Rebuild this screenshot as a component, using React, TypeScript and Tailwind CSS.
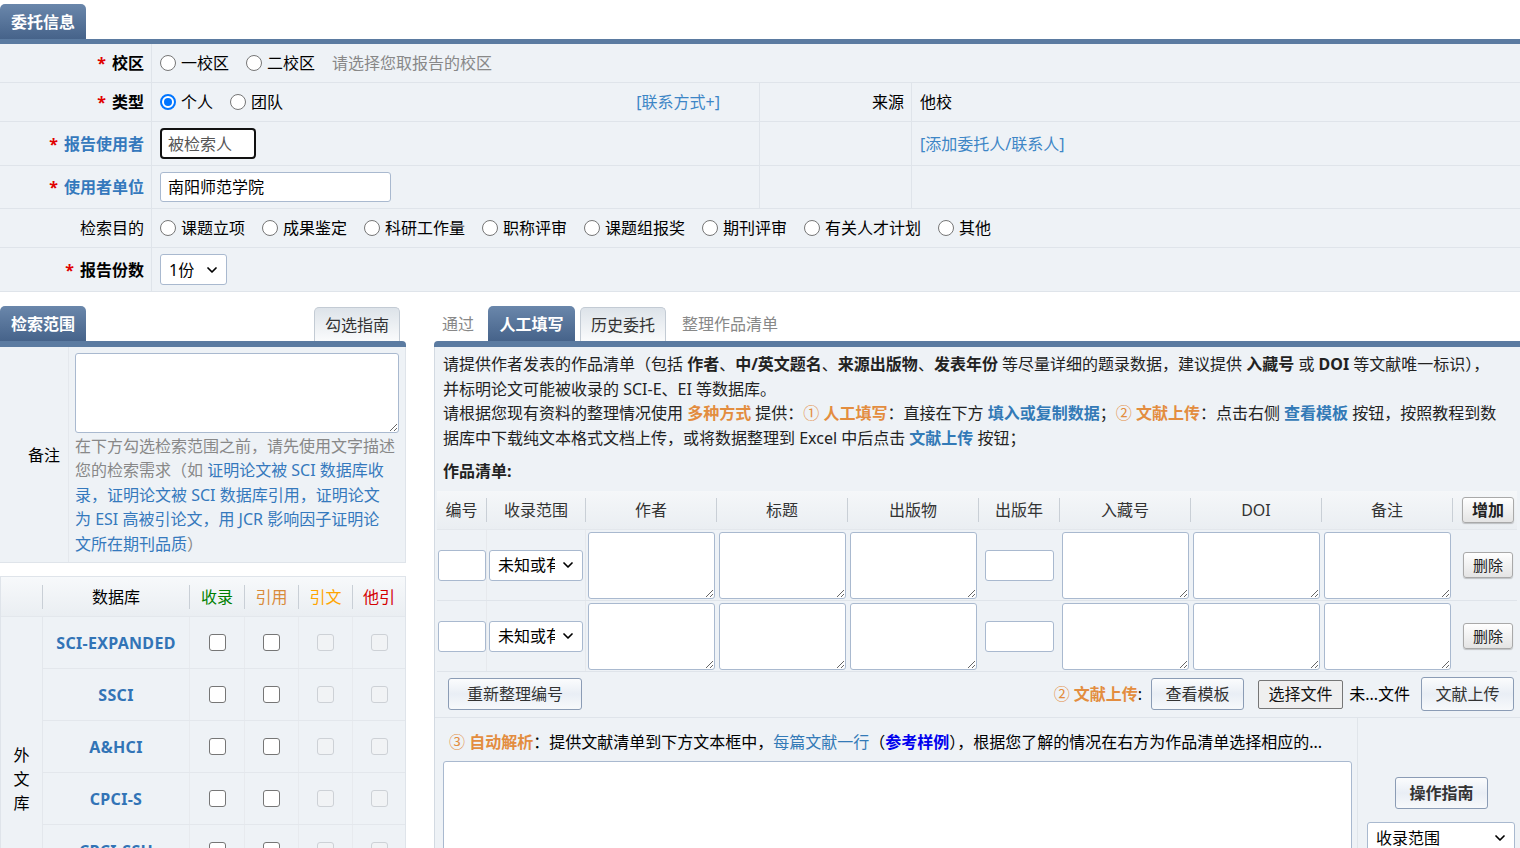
import React from "react";
import { ChevronDown } from "lucide-react";

const LINE = "border-[#dfe4ea]";

const DarkTab = ({ children, className = "" }: { children: React.ReactNode; className?: string }) => (
  <div
    className={`h-[35px] flex items-center justify-center rounded-t-[5px] bg-linear-to-b from-[#6a87ab] to-[#46638a] text-white font-bold text-[16px] ${className}`}
  >
    {children}
  </div>
);

const LightTab = ({ children, className = "" }: { children: React.ReactNode; className?: string }) => (
  <div
    className={`h-[34px] flex items-center justify-center rounded-t-[5px] border border-b-0 border-[#c3cbd4] bg-linear-to-b from-[#dde3e9] to-[#fafbfc] text-[#333] ${className}`}
  >
    {children}
  </div>
);

const Label = ({
  req,
  blue,
  bold,
  children,
}: {
  req?: boolean;
  blue?: boolean;
  bold?: boolean;
  children?: React.ReactNode;
}) => (
  <div className={`w-[152px] shrink-0 flex items-center justify-end pr-[7px] border-r ${LINE}`}>
    {req && <span className="text-[#e00000] font-bold mr-[6px]">*</span>}
    <span className={blue ? "text-[#3579bd] font-bold" : bold ? "font-bold" : ""}>{children}</span>
  </div>
);

// drawn radio, sized like the reference (16px)
const Radio = ({ label, checked }: { label: string; checked?: boolean }) => (
  <div className="flex items-center mr-[17px] whitespace-nowrap">
    {checked ? (
      <span className="mr-[5px] w-[16px] h-[16px] rounded-full border-2 border-[#0075ff] bg-white flex items-center justify-center">
        <span className="w-[8px] h-[8px] rounded-full bg-[#0075ff]" />
      </span>
    ) : (
      <span className="mr-[5px] w-[16px] h-[16px] rounded-full border border-[#767676] bg-white" />
    )}
    <span>{label}</span>
  </div>
);

const Check = ({ disabled }: { disabled?: boolean }) =>
  disabled ? (
    <span className="w-[17px] h-[17px] rounded-[3px] border border-[#cdd1d6] bg-[#f1f3f5]" />
  ) : (
    <span className="w-[17px] h-[17px] rounded-[3px] border border-[#767676] bg-white" />
  );

const FakeSelect = ({ text, className = "", textW = "" }: { text: string; className?: string; textW?: string }) => (
  <div
    className={`flex items-center justify-between bg-white border border-[#a9b9cf] rounded-[3px] pl-[8px] pr-[6px] ${className}`}
  >
    <span className={`overflow-hidden whitespace-nowrap ${textW}`}>{text}</span>
    <ChevronDown size={16} strokeWidth={2.6} className="shrink-0" />
  </div>
);

const Area = ({ className = "" }: { className?: string }) => (
  <textarea className={`block bg-white border border-[#a9b9cf] rounded-[3px] resize ${className}`} />
);

const BlueBtn = ({ children, className = "" }: { children: React.ReactNode; className?: string }) => (
  <div
    className={`flex items-center justify-center rounded-[3px] border border-[#8b9cb5] bg-linear-to-b from-[#fbfcfd] via-[#e9eef5] to-[#f7f9fb] text-[#333] ${className}`}
  >
    {children}
  </div>
);

const GrayBtn = ({ children, className = "" }: { children: React.ReactNode; className?: string }) => (
  <div
    className={`flex items-center justify-center rounded-[3px] border border-[#a9a9a9] bg-linear-to-b from-[#ffffff] to-[#e4e4e4] shadow-[0_1px_1px_rgba(0,0,0,0.2)] text-[#222] ${className}`}
  >
    {children}
  </div>
);

const Header = () => (
  <div className="pt-[4px]">
    <DarkTab className="w-[86px]">委托信息</DarkTab>
    <div className="h-[5px] bg-[#5b7ba1]" />
    <div className="bg-[#eef2f6]">
      {/* 校区 */}
      <div className={`flex h-[39px] border-b ${LINE}`}>
        <Label req bold>
          校区
        </Label>
        <div className="flex-1 flex items-center pl-[8px]">
          <Radio label="一校区" />
          <Radio label="二校区" />
          <span className="text-[#888]">请选择您取报告的校区</span>
        </div>
      </div>
      {/* 类型 */}
      <div className={`flex h-[39px] border-b ${LINE}`}>
        <Label req bold>
          类型
        </Label>
        <div className={`w-[608px] flex items-center pl-[8px] border-r ${LINE}`}>
          <Radio label="个人" checked />
          <Radio label="团队" />
          <span className="ml-auto mr-[39px] text-[#3d86c6]">[联系方式+]</span>
        </div>
        <Label>来源</Label>
        <div className="flex-1 flex items-center pl-[8px]">他校</div>
      </div>
      {/* 报告使用者 */}
      <div className={`flex h-[44px] border-b ${LINE}`}>
        <Label req blue>
          报告使用者
        </Label>
        <div className={`w-[608px] flex items-center pl-[8px] border-r ${LINE}`}>
          <div className="w-[96px] h-[31px] bg-white border-2 border-[#111] rounded-[4px] flex items-center pl-[6px] text-[#555]">
            被检索人
          </div>
        </div>
        <Label />
        <div className="flex-1 flex items-center pl-[8px] text-[#3d86c6]">[添加委托人/联系人]</div>
      </div>
      {/* 使用者单位 */}
      <div className={`flex h-[43px] border-b ${LINE}`}>
        <Label req blue>
          使用者单位
        </Label>
        <div className={`w-[608px] flex items-center pl-[8px] border-r ${LINE}`}>
          <div className="w-[231px] h-[30px] bg-white border border-[#a9b9cf] rounded-[3px] flex items-center pl-[7px]">
            南阳师范学院
          </div>
        </div>
        <Label />
        <div className="flex-1" />
      </div>
      {/* 检索目的 */}
      <div className={`flex h-[39px] border-b ${LINE}`}>
        <Label>检索目的</Label>
        <div className="flex-1 flex items-center pl-[8px]">
          {["课题立项", "成果鉴定", "科研工作量", "职称评审", "课题组报奖", "期刊评审", "有关人才计划", "其他"].map((t) => (
            <Radio key={t} label={t} />
          ))}
        </div>
      </div>
      {/* 报告份数 */}
      <div className={`flex h-[44px] border-b ${LINE}`}>
        <Label req bold>
          报告份数
        </Label>
        <div className="flex-1 flex items-center pl-[8px]">
          <FakeSelect text="1份" className="w-[67px] h-[31px]" />
        </div>
      </div>
    </div>
  </div>
);

const DBS = ["SCI-EXPANDED", "SSCI", "A&HCI", "CPCI-S", "CPCI-SSH", "ESCI"];

const LeftPanel = () => (
  <div className="w-[406px] shrink-0">
    <div className="flex items-end justify-between h-[35px]">
      <DarkTab className="w-[86px]">检索范围</DarkTab>
      <LightTab className="w-[86px] mr-[6px]">勾选指南</LightTab>
    </div>
    <div className="h-[6px] bg-[#5b7ba1] rounded-tr-[4px]" />
    <div className={`flex h-[216px] bg-[#eef2f6] border-b border-r ${LINE}`}>
      <div className="w-[69px] shrink-0 flex items-center justify-end pr-[8px] border-r border-[#e4e8ed]">备注</div>
      <div className="flex-1 pl-[6px] pt-[6px]">
        <Area className="w-[324px] h-[80px]" />
        <p className="mt-[1px] text-[#888] leading-[24.4px] whitespace-nowrap">
          在下方勾选检索范围之前，请先使用文字描述
          <br />
          您的检索需求（如 <span className="text-[#3579bd]">证明论文被 SCI 数据库收</span>
          <br />
          <span className="text-[#3579bd]">
            录，证明论文被 SCI 数据库引用，证明论文
            <br />
            为 ESI 高被引论文，用 JCR 影响因子证明论
            <br />
            文所在期刊品质
          </span>
          ）
        </p>
      </div>
    </div>

    <div className={`mt-[13px] border ${LINE} bg-[#eef2f6]`}>
      <div className="flex h-[40px] items-center bg-linear-to-b from-[#f7f9fb] to-[#eaeef2] border-b border-[#e3e7ec]">
        <div className="w-[42px] h-[24px] border-r border-[#c9cfd6]" />
        <div className="w-[147px] h-[24px] flex items-center justify-center border-r border-[#c9cfd6]">数据库</div>
        <div className="w-[55px] h-[24px] flex items-center justify-center border-r border-[#c9cfd6] text-[#008000]">收录</div>
        <div className="w-[54px] h-[24px] flex items-center justify-center border-r border-[#c9cfd6] text-[#d98b3a]">引用</div>
        <div className="w-[54px] h-[24px] flex items-center justify-center border-r border-[#c9cfd6] text-[#ffa500]">引文</div>
        <div className="w-[52px] h-[24px] flex items-center justify-center text-[#d40000]">他引</div>
      </div>
      <div className="flex">
        <div className="w-[42px] shrink-0 flex items-center justify-center border-r border-[#e3e7ec] pt-[12px]">
          <div className="w-[16px] leading-[24px] text-center">外 文 库</div>
        </div>
        <div className="flex-1">
          {DBS.map((d) => (
            <div key={d} className="flex h-[52px] border-b border-[#e3e7ec]">
              <div className="w-[147px] flex items-center justify-center font-bold text-[#3274b6] border-r border-[#e7eaee] tracking-[0.3px]">
                {d}
              </div>
              <div className="w-[55px] flex items-center justify-center border-r border-[#e7eaee]">
                <Check />
              </div>
              <div className="w-[54px] flex items-center justify-center border-r border-[#e7eaee]">
                <Check />
              </div>
              <div className="w-[54px] flex items-center justify-center border-r border-[#e7eaee]">
                <Check disabled />
              </div>
              <div className="w-[52px] flex items-center justify-center">
                <Check disabled />
              </div>
            </div>
          ))}
        </div>
      </div>
    </div>
  </div>
);

const COLS = "grid grid-cols-[50px_99px_131px_131px_131px_81px_131px_131px_131px_64px]";
const HEADS = ["编号", "收录范围", "作者", "标题", "出版物", "出版年", "入藏号", "DOI", "备注"];

const WorkRow = () => (
  <div className={`${COLS} h-[71px] border-b border-[#dfe4ea]`}>
    <div className="flex items-center justify-center border-r border-[#e6e9ed]">
      <div className="w-[48px] h-[31px] bg-white border border-[#a9b9cf] rounded-[3px]" />
    </div>
    <div className="flex items-center justify-center border-r border-[#e6e9ed]">
      <FakeSelect text="未知或有误" className="w-[94px] h-[31px]" textW="w-[57px]" />
    </div>
    {[0, 1, 2].map((i) => (
      <div key={i} className="flex items-center justify-center">
        <Area className="w-[127px] h-[67px]" />
      </div>
    ))}
    <div className="flex items-center justify-center">
      <div className="w-[69px] h-[31px] bg-white border border-[#a9b9cf] rounded-[3px]" />
    </div>
    {[0, 1, 2].map((i) => (
      <div key={i} className="flex items-center justify-center">
        <Area className="w-[127px] h-[67px]" />
      </div>
    ))}
    <div className="flex items-center justify-center pl-[6px]">
      <GrayBtn className="w-[50px] h-[26px] text-[15px]">删除</GrayBtn>
    </div>
  </div>
);

const RightPanel = () => (
  <div className="flex-1">
    <div className="flex items-end h-[35px]">
      <span className="self-center pl-[8px] pr-[14px] text-[#888]">通过</span>
      <DarkTab className="w-[87px]">人工填写</DarkTab>
      <LightTab className="w-[86px] ml-[5px]">历史委托</LightTab>
      <span className="self-center ml-[16px] text-[#888]">整理作品清单</span>
    </div>
    <div className="h-[6px] bg-[#5b7ba1] rounded-tl-[4px]" />
    <div className="bg-[#eef2f6] border-l border-[#d3dae2] h-[501px]">
      <div className="px-[8px] pt-[5px] leading-[24.5px] text-[#222]">
        <p>
          请提供作者发表的作品清单（包括 <b>作者</b>、<b>中/英文题名</b>、<b>来源出版物</b>、<b>发表年份</b>{" "}
          等尽量详细的题录数据，建议提供 <b>入藏号</b> 或 <b>DOI</b> 等文献唯一标识），
          <br />
          并标明论文可能被收录的 SCI-E、EI 等数据库。
        </p>
        <p>
          请根据您现有资料的整理情况使用 <b className="text-[#e38d3f]">多种方式</b> 提供：
          <span className="text-[#e38d3f]">
            ① <b>人工填写</b>
          </span>
          ：直接在下方 <b className="text-[#337ab7]">填入或复制数据</b>；
          <span className="text-[#e38d3f]">
            ② <b>文献上传</b>
          </span>
          ：点击右侧 <b className="text-[#337ab7]">查看模板</b> 按钮，按照教程到数据库中下载纯文本格式文档上传，或将数据整理到 Excel
          中后点击 <b className="text-[#337ab7]">文献上传</b> 按钮；
        </p>
        <div className="h-[41px] pt-[9px] font-bold">作品清单:</div>
      </div>

      <div className="ml-[2px] w-[1080px]">
        <div className={`${COLS} h-[39px] items-center border-b border-[#e3e7ec] bg-linear-to-b from-[#f5f7f9] to-[#eaeef2]`}>
          {HEADS.map((h) => (
            <div key={h} className="h-[24px] flex items-center justify-center border-r border-[#c9cfd6] text-[#333]">
              {h}
            </div>
          ))}
          <div className="flex items-center justify-center pl-[6px]">
            <GrayBtn className="w-[52px] h-[26px] font-bold">增加</GrayBtn>
          </div>
        </div>
        <WorkRow />
        <WorkRow />
        <div className="flex items-center h-[44px] pl-[11px] pr-[3px]">
          <BlueBtn className="w-[134px] h-[32px]">重新整理编号</BlueBtn>
          <span className="ml-auto text-[#e38d3f]">
            ② <b>文献上传</b>
          </span>
          <span className="mr-[9px]">:</span>
          <BlueBtn className="w-[93px] h-[32px]">查看模板</BlueBtn>
          <div className="ml-[14px] w-[85px] h-[29px] flex items-center justify-center rounded-[2px] border border-[#767676] bg-[#efefef] text-[#111]">
            选择文件
          </div>
          <span className="ml-[6px] mr-[11px]">未...文件</span>
          <BlueBtn className="w-[93px] h-[34px]">文献上传</BlueBtn>
        </div>
      </div>

      <div className="flex border-t border-[#dfe4ea] mt-[1px]">
        <div className="w-[922px] pl-[8px] pt-[12px]">
          <div className="pl-[6px] leading-[24px] whitespace-nowrap">
            <span className="text-[#e38d3f]">
              ③ <b>自动解析</b>
            </span>
            ：提供文献清单到下方文本框中，<span className="text-[#337ab7]">每篇文献一行</span>（
            <b className="text-[#0000ee]">参考样例</b>），根据您了解的情况在右方为作品清单选择相应的...
          </div>
          <Area className="mt-[7px] w-[909px] h-[120px]" />
        </div>
        <div className="flex-1 border-l border-[#e0e5ea] h-[140px] pt-[59px] pl-[9px]">
          <BlueBtn className="ml-[28px] w-[93px] h-[32px] font-bold">操作指南</BlueBtn>
          <FakeSelect text="收录范围" className="mt-[13px] w-[148px] h-[32px]" />
        </div>
      </div>
    </div>
  </div>
);

export default function App() {
  return (
    <div className="w-[1520px] h-[848px] overflow-hidden bg-white text-[16px] leading-[24px] text-black [font-family:'Noto_Sans','Noto_Sans_CJK_SC',sans-serif]">
      <Header />
      <div className="flex mt-[14px] gap-[28px]">
        <LeftPanel />
        <RightPanel />
      </div>
    </div>
  );
}
